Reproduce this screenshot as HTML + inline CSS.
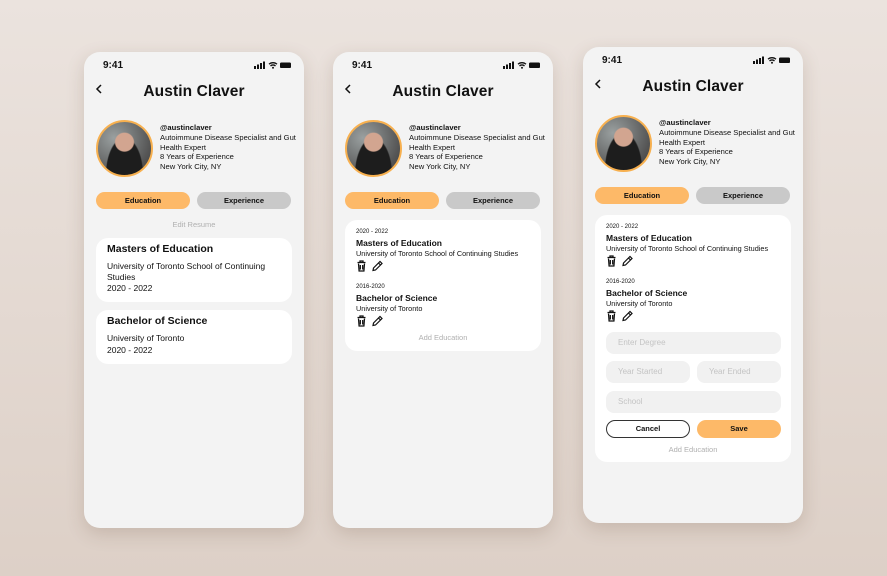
<!DOCTYPE html>
<html><head><meta charset="utf-8"><style>
*{margin:0;padding:0;box-sizing:border-box}
body{width:887px;height:576px;overflow:hidden;background:linear-gradient(180deg,#ebe3de 0%,#ddd0c7 100%);font-family:"Liberation Sans","DejaVu Sans",sans-serif;color:#111;position:relative}
.ph{position:absolute;width:220px;height:476px;background:#f3f3f3;border-radius:16px;box-shadow:0 6px 18px rgba(90,60,40,.18)}
.a{position:absolute;white-space:nowrap}
svg{display:block}
.time{left:19px;top:8px;font-size:10px;font-weight:bold}
.st{right:12px;top:9px}
.back{left:11px;top:31px}
.title{left:0;width:220px;text-align:center;top:31px;font-size:15.5px;font-weight:bold;letter-spacing:.1px}
.av{left:12px;top:68px;width:57px;height:57px;border-radius:50%;border:2px solid #f7b04f;background:radial-gradient(circle at 50% 38%,#d2a590 0 9px,transparent 10px),radial-gradient(ellipse at 50% 100%,#1d1d1d 0 18px,transparent 19px),radial-gradient(circle at 30% 30%,#9aa0a0,#555 70%,#3a3a3a);overflow:hidden}
.info{left:76px;top:71px;font-size:7.6px;line-height:9.8px}
.tab{top:140px;width:94px;height:17px;border-radius:9px;font-size:7.5px;font-weight:bold;text-align:center;line-height:17px}
.t1{left:12px;background:#fdb968}.t2{left:113px;background:#c9c9c9}
.card{position:absolute;left:12px;width:196px;background:#fff;border-radius:12px}
.gray{color:#b0b0b0;font-size:7.5px}
.inp{position:absolute;background:#f1f1f1;border-radius:8px;height:22px;color:#c4c4c4;font-size:8px;line-height:22px;padding-left:12px}
</style></head><body>

<!-- phone 1 -->
<div class="ph" style="left:84px;top:52px">
<div class="a time">9:41</div>
<div class="a st"><svg width="38" height="8"><rect x="0" y="5" width="2" height="3" fill="#111"/><rect x="3" y="3.5" width="2" height="4.5" fill="#111"/><rect x="6" y="2" width="2" height="6" fill="#111"/><rect x="9" y="0.5" width="2" height="7.5" fill="#111"/><path d="M15 3.2a6 6 0 0 1 8 0M16.5 5a3.5 3.5 0 0 1 5 0" stroke="#111" stroke-width="1.3" fill="none"/><circle cx="19" cy="6.8" r="1" fill="#111"/><rect x="26" y="1.5" width="11" height="5.5" rx="1.3" fill="#111"/></svg></div>
<div class="a back"><svg width="8" height="12"><path d="M6 2L2 6l4 4" stroke="#111" stroke-width="1.5" fill="none"/></svg></div>
<div class="a title">Austin Claver</div>
<div class="a av"></div>
<div class="a info"><b>@austinclaver</b><br>Autoimmune Disease Specialist and Gut<br>Health Expert<br>8 Years of Experience<br>New York City, NY</div>
<div class="a tab t1">Education</div><div class="a tab t2">Experience</div>
<div class="a gray" style="left:0;width:220px;text-align:center;top:168px">Edit Resume</div>
<div class="card" style="top:186px;height:64px">
<div class="a" style="left:11px;top:5px;font-size:10.5px;font-weight:bold">Masters of Education</div>
<div class="a" style="left:11px;top:23px;font-size:8.5px;line-height:11px">University of Toronto School of Continuing<br>Studies</div>
<div class="a" style="left:11px;top:45px;font-size:8.5px">2020 - 2022</div>
</div>
<div class="card" style="top:258px;height:54px">
<div class="a" style="left:11px;top:5px;font-size:10.5px;font-weight:bold">Bachelor of Science</div>
<div class="a" style="left:11px;top:23px;font-size:8.5px">University of Toronto</div>
<div class="a" style="left:11px;top:35px;font-size:8.5px">2020 - 2022</div>
</div>
</div>

<!-- phone 2 -->
<div class="ph" style="left:333px;top:52px">
<div class="a time">9:41</div>
<div class="a st"><svg width="38" height="8"><rect x="0" y="5" width="2" height="3" fill="#111"/><rect x="3" y="3.5" width="2" height="4.5" fill="#111"/><rect x="6" y="2" width="2" height="6" fill="#111"/><rect x="9" y="0.5" width="2" height="7.5" fill="#111"/><path d="M15 3.2a6 6 0 0 1 8 0M16.5 5a3.5 3.5 0 0 1 5 0" stroke="#111" stroke-width="1.3" fill="none"/><circle cx="19" cy="6.8" r="1" fill="#111"/><rect x="26" y="1.5" width="11" height="5.5" rx="1.3" fill="#111"/></svg></div>
<div class="a back"><svg width="8" height="12"><path d="M6 2L2 6l4 4" stroke="#111" stroke-width="1.5" fill="none"/></svg></div>
<div class="a title">Austin Claver</div>
<div class="a av"></div>
<div class="a info"><b>@austinclaver</b><br>Autoimmune Disease Specialist and Gut<br>Health Expert<br>8 Years of Experience<br>New York City, NY</div>
<div class="a tab t1">Education</div><div class="a tab t2">Experience</div>
<div class="card" style="top:168px;height:131px">
<div class="a" style="left:11px;top:9px;font-size:6px">2020 - 2022</div>
<div class="a" style="left:11px;top:18px;font-size:8.5px;font-weight:bold">Masters of Education</div>
<div class="a" style="left:11px;top:29px;font-size:7.3px">University of Toronto School of Continuing Studies</div>
<div class="a" style="left:11px;top:40px"><svg width="30" height="12"><path d="M1.5 2.5h8M4 2.5V1h3v1.5M2.5 3.5l.6 7.5h4.8l.6-7.5M4.3 5v4.5M6.7 5v4.5" stroke="#111" stroke-width="1.3" fill="none"/><path d="M17 10.5l.5-2.5 6.5-6.5 2 2-6.5 6.5z M22.5 3l2 2" stroke="#111" stroke-width="1.2" fill="none"/></svg></div>
<div class="a" style="left:11px;top:64px;font-size:6px">2016-2020</div>
<div class="a" style="left:11px;top:73px;font-size:8.5px;font-weight:bold">Bachelor of Science</div>
<div class="a" style="left:11px;top:84px;font-size:7.3px">University of Toronto</div>
<div class="a" style="left:11px;top:95px"><svg width="30" height="12"><path d="M1.5 2.5h8M4 2.5V1h3v1.5M2.5 3.5l.6 7.5h4.8l.6-7.5M4.3 5v4.5M6.7 5v4.5" stroke="#111" stroke-width="1.3" fill="none"/><path d="M17 10.5l.5-2.5 6.5-6.5 2 2-6.5 6.5z M22.5 3l2 2" stroke="#111" stroke-width="1.2" fill="none"/></svg></div>
<div class="a gray" style="left:0;width:196px;text-align:center;top:113px">Add Education</div>
</div>
</div>

<!-- phone 3 -->
<div class="ph" style="left:583px;top:47px">
<div class="a time">9:41</div>
<div class="a st"><svg width="38" height="8"><rect x="0" y="5" width="2" height="3" fill="#111"/><rect x="3" y="3.5" width="2" height="4.5" fill="#111"/><rect x="6" y="2" width="2" height="6" fill="#111"/><rect x="9" y="0.5" width="2" height="7.5" fill="#111"/><path d="M15 3.2a6 6 0 0 1 8 0M16.5 5a3.5 3.5 0 0 1 5 0" stroke="#111" stroke-width="1.3" fill="none"/><circle cx="19" cy="6.8" r="1" fill="#111"/><rect x="26" y="1.5" width="11" height="5.5" rx="1.3" fill="#111"/></svg></div>
<div class="a back"><svg width="8" height="12"><path d="M6 2L2 6l4 4" stroke="#111" stroke-width="1.5" fill="none"/></svg></div>
<div class="a title">Austin Claver</div>
<div class="a av"></div>
<div class="a info"><b>@austinclaver</b><br>Autoimmune Disease Specialist and Gut<br>Health Expert<br>8 Years of Experience<br>New York City, NY</div>
<div class="a tab t1">Education</div><div class="a tab t2">Experience</div>
<div class="card" style="top:168px;height:247px">
<div class="a" style="left:11px;top:9px;font-size:6px">2020 - 2022</div>
<div class="a" style="left:11px;top:18px;font-size:8.5px;font-weight:bold">Masters of Education</div>
<div class="a" style="left:11px;top:29px;font-size:7.3px">University of Toronto School of Continuing Studies</div>
<div class="a" style="left:11px;top:40px"><svg width="30" height="12"><path d="M1.5 2.5h8M4 2.5V1h3v1.5M2.5 3.5l.6 7.5h4.8l.6-7.5M4.3 5v4.5M6.7 5v4.5" stroke="#111" stroke-width="1.3" fill="none"/><path d="M17 10.5l.5-2.5 6.5-6.5 2 2-6.5 6.5z M22.5 3l2 2" stroke="#111" stroke-width="1.2" fill="none"/></svg></div>
<div class="a" style="left:11px;top:64px;font-size:6px">2016-2020</div>
<div class="a" style="left:11px;top:73px;font-size:8.5px;font-weight:bold">Bachelor of Science</div>
<div class="a" style="left:11px;top:84px;font-size:7.3px">University of Toronto</div>
<div class="a" style="left:11px;top:95px"><svg width="30" height="12"><path d="M1.5 2.5h8M4 2.5V1h3v1.5M2.5 3.5l.6 7.5h4.8l.6-7.5M4.3 5v4.5M6.7 5v4.5" stroke="#111" stroke-width="1.3" fill="none"/><path d="M17 10.5l.5-2.5 6.5-6.5 2 2-6.5 6.5z M22.5 3l2 2" stroke="#111" stroke-width="1.2" fill="none"/></svg></div>
<div class="inp" style="left:11px;top:117px;width:175px">Enter Degree</div>
<div class="inp" style="left:11px;top:146px;width:84px">Year Started</div>
<div class="inp" style="left:102px;top:146px;width:84px">Year Ended</div>
<div class="inp" style="left:11px;top:176px;width:175px">School</div>
<div class="a" style="left:11px;top:205px;width:84px;height:18px;border:1px solid #333;border-radius:9px;text-align:center;line-height:16px;font-size:7.5px;font-weight:bold">Cancel</div>
<div class="a" style="left:102px;top:205px;width:84px;height:18px;background:#fdb968;border-radius:9px;text-align:center;line-height:18px;font-size:7.5px;font-weight:bold">Save</div>
<div class="a gray" style="left:0;width:196px;text-align:center;top:230px">Add Education</div>
</div>
</div>
</body></html>
